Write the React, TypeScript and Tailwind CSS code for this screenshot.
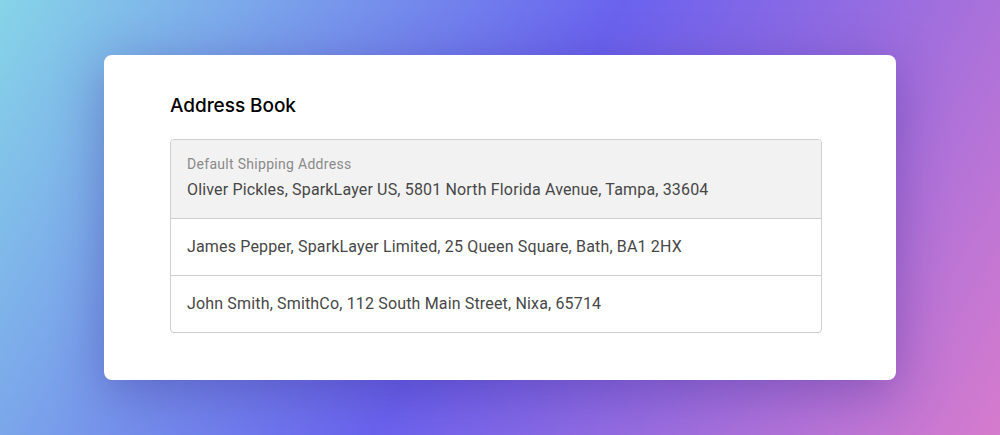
const addresses = [
  'James Pepper, SparkLayer Limited, 25 Queen Square, Bath, BA1 2HX',
  'John Smith, SmithCo, 112 South Main Street, Nixa, 65714',
];

export default function App() {
  return (
    <main className="flex h-[435px] w-full items-center justify-center bg-[linear-gradient(120deg,#86d4e8_0%,#6a62ee_50%,#d67bcd_100%)] font-['Roboto',sans-serif]">
      <section className="h-[325px] w-[792px] rounded-lg bg-white pl-[66px] pr-[74px] pt-[39px] shadow-[0_12px_50px_rgba(50,30,130,0.35)]">
        <h1 className="font-['Inter',sans-serif] text-[19px] font-medium leading-6 tracking-[-0.05px] text-black">
          Address Book
        </h1>
        <div className="mt-[21px] overflow-hidden rounded border border-[#cfcfcf] text-[#474747] tracking-[0.16px]">
          <div className="bg-[#f2f2f2] px-4 pt-[14px] pb-[16px]">
            <div className="text-sm leading-5 tracking-[0.3px] text-[#8a8a8a]">Default Shipping Address</div>
            <div className="mt-1 text-base leading-6">
              Oliver Pickles, SparkLayer US, 5801 North Florida Avenue, Tampa, 33604
            </div>
          </div>
          {addresses.map(a => (
            <div key={a} className="border-t border-[#cfcfcf] px-4 py-4 text-base leading-6">
              {a}
            </div>
          ))}
        </div>
      </section>
    </main>
  );
}
